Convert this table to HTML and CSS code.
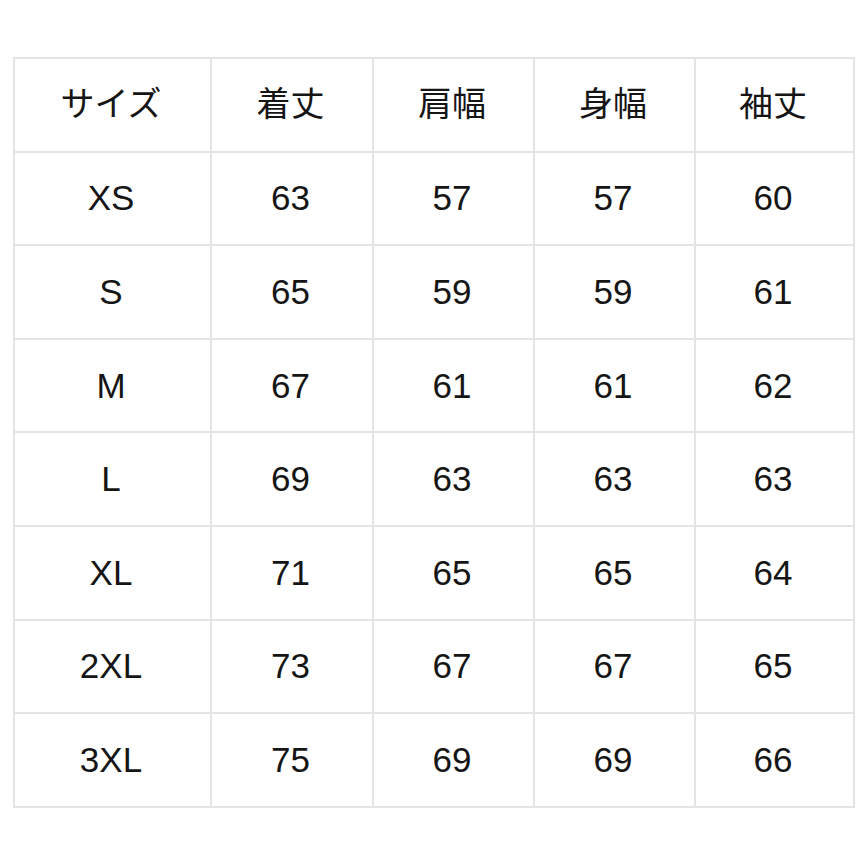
FILE: index.html
```html
<!DOCTYPE html>
<html lang="ja">
<head>
<meta charset="utf-8">
<title>サイズ表</title>
<link rel="stylesheet" href="styles.css">
</head>
<body>
<div class="page">
<table class="size-table">
<colgroup>
<col class="c-first"><col class="c-mid"><col class="c-std"><col class="c-std"><col class="c-last">
</colgroup>
<thead>
<tr><th>サイズ</th><th>着丈</th><th>肩幅</th><th>身幅</th><th>袖丈</th></tr>
</thead>
<tbody>
<tr><td>XS</td><td>63</td><td>57</td><td>57</td><td>60</td></tr>
<tr><td>S</td><td>65</td><td>59</td><td>59</td><td>61</td></tr>
<tr><td>M</td><td>67</td><td>61</td><td>61</td><td>62</td></tr>
<tr><td>L</td><td>69</td><td>63</td><td>63</td><td>63</td></tr>
<tr><td>XL</td><td>71</td><td>65</td><td>65</td><td>64</td></tr>
<tr><td>2XL</td><td>73</td><td>67</td><td>67</td><td>65</td></tr>
<tr><td>3XL</td><td>75</td><td>69</td><td>69</td><td>66</td></tr>
</tbody>
</table>
</div>
</body>
</html>
```
FILE: styles.css
```css
html, body {
  margin: 0;
  padding: 0;
  background: #ffffff;
}
.page {
  padding: 57px 0 0 13px;
}
.size-table {
  border-collapse: collapse;
  table-layout: fixed;
  width: 840px;
  height: 749px;
  font-family: "Liberation Sans", "Noto Sans CJK JP", sans-serif;
  font-size: 35px;
  color: #151515;
}
.c-first { width: 197px; }
.c-mid { width: 162px; }
.c-std { width: 161px; }
.c-last { width: 159px; }
.size-table tr {
  height: 93.6px;
}
.size-table th,
.size-table td {
  border: 2px solid #e4e4e4;
  text-align: center;
  vertical-align: middle;
  padding: 0 3px 0 0;
  font-weight: normal;
}
.size-table th {
  font-family: "Noto Sans CJK JP", sans-serif;
  font-size: 34px;
  padding-bottom: 6px;
}
```
